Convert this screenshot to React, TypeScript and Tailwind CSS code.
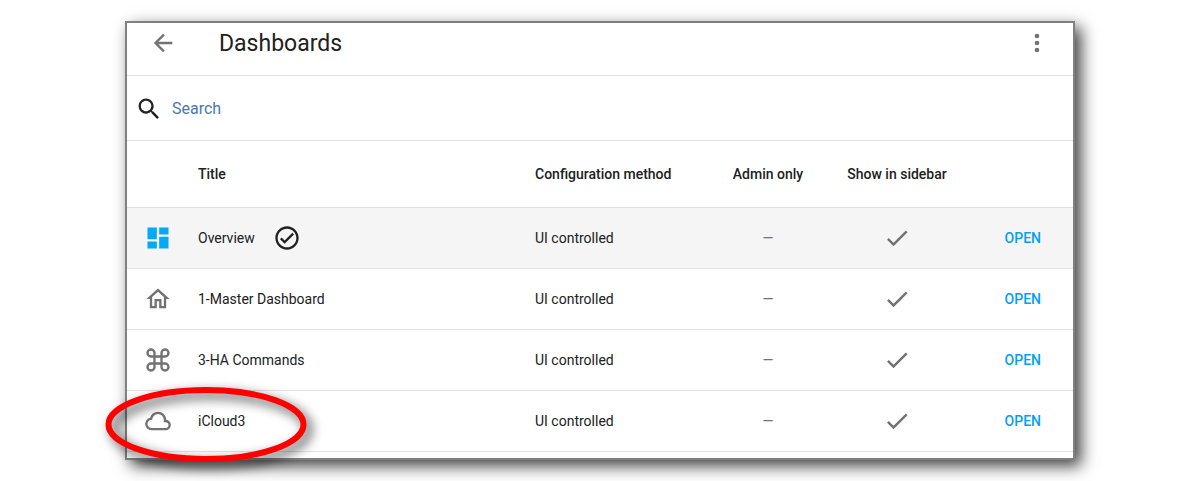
const icons = {
  arrowLeft: 'M20,11V13H8L13.5,18.5L12.08,19.92L4.16,12L12.08,4.08L13.5,5.5L8,11H20Z',
  dots: 'M12,16A2,2 0 0,1 14,18A2,2 0 0,1 12,20A2,2 0 0,1 10,18A2,2 0 0,1 12,16M12,10A2,2 0 0,1 14,12A2,2 0 0,1 12,14A2,2 0 0,1 10,12A2,2 0 0,1 12,10M12,4A2,2 0 0,1 14,6A2,2 0 0,1 12,8A2,2 0 0,1 10,6A2,2 0 0,1 12,4Z',
  magnify: 'M9.5,3A6.5,6.5 0 0,1 16,9.5C16,11.11 15.41,12.59 14.44,13.73L14.71,14H15.5L20.5,19L19,20.5L14,15.5V14.71L13.73,14.44C12.59,15.41 11.11,16 9.5,16A6.5,6.5 0 0,1 3,9.5A6.5,6.5 0 0,1 9.5,3M9.5,5C7,5 5,7 5,9.5C5,12 7,14 9.5,14C12,14 14,12 14,9.5C14,7 12,5 9.5,5Z',
  dashboard: 'M13,3V9H21V3M13,21H21V11H13M3,21H11V15H3M3,13H11V3H3V13Z',
  home: 'M12 5.69L17 10.19V18H15V12H9V18H7V10.19L12 5.69M12 3L2 12H5V20H11V14H13V20H19V12H22L12 3Z',
  command: 'M6,2A4,4 0 0,1 10,6V8H14V6A4,4 0 0,1 18,2A4,4 0 0,1 22,6A4,4 0 0,1 18,10H16V14H18A4,4 0 0,1 22,18A4,4 0 0,1 18,22A4,4 0 0,1 14,18V16H10V18A4,4 0 0,1 6,22A4,4 0 0,1 2,18A4,4 0 0,1 6,14H8V10H6A4,4 0 0,1 2,6A4,4 0 0,1 6,2M16,18A2,2 0 0,0 18,20A2,2 0 0,0 20,18A2,2 0 0,0 18,16H16V18M14,10H10V14H14V10M6,16A2,2 0 0,0 4,18A2,2 0 0,0 6,20A2,2 0 0,0 8,18V16H6M8,6A2,2 0 0,0 6,4A2,2 0 0,0 4,6A2,2 0 0,0 6,8H8V6M18,8A2,2 0 0,0 20,6A2,2 0 0,0 18,4A2,2 0 0,0 16,6V8H18Z',
  cloud: 'M6.5 20Q4.22 20 2.61 18.43 1 16.85 1 14.58 1 12.63 2.17 11.1 3.35 9.57 5.25 9.15 5.88 6.85 7.75 5.43 9.63 4 12 4 14.93 4 16.96 6.04 19 8.07 19 11 20.73 11.2 21.86 12.5 23 13.78 23 15.5 23 17.38 21.69 18.69 20.38 20 18.5 20M6.5 18H18.5Q19.55 18 20.27 17.27 21 16.55 21 15.5 21 14.45 20.27 13.73 19.55 13 18.5 13H17V11Q17 8.93 15.54 7.46 14.08 6 12 6 9.93 6 8.46 7.46 7 8.93 7 11H6.5Q5.05 11 4.03 12.03 3 13.05 3 14.5 3 15.95 4.03 17 5.05 18 6.5 18Z',
  check: 'M21,7L9,19L3.5,13.5L4.91,12.09L9,16.17L19.59,5.59L21,7Z',
  checkCircle: 'M12 2C6.5 2 2 6.5 2 12S6.5 22 12 22 22 17.5 22 12 17.5 2 12 2M12 20C7.59 20 4 16.41 4 12S7.59 4 12 4 20 7.59 20 12 16.41 20 12 20M16.59 7.58L10 14.17L7.41 11.59L6 13L10 17L18 9L16.59 7.58Z',
};

type IconName = keyof typeof icons;

function Icon({ name }: { name: IconName }) {
  return (
    <svg viewBox="0 0 24 24" className="size-7 shrink-0" fill="currentColor" aria-hidden="true">
      <path d={icons[name]} />
    </svg>
  );
}

interface Dashboard {
  title: string;
  icon: IconName;
  isDefault?: boolean;
  highlighted?: boolean;
}

const dashboards: Dashboard[] = [
  { title: 'Overview', icon: 'dashboard', isDefault: true },
  { title: '1-Master Dashboard', icon: 'home' },
  { title: '3-HA Commands', icon: 'command' },
  { title: 'iCloud3', icon: 'cloud', highlighted: true },
];

function Highlight() {
  return (
    <svg
      viewBox="0 0 202 76"
      className="pointer-events-none absolute top-1/2 -left-[22px] h-[76px] w-[202px] max-w-none -translate-y-[34px] overflow-visible drop-shadow-[5px_5px_6px_rgba(0,0,0,0.75)]"
      fill="none"
      aria-hidden="true"
    >
      <ellipse cx="101" cy="37.5" rx="97.5" ry="34.5" stroke="#ff0000" strokeWidth="6" />
    </svg>
  );
}

function Row({ dashboard }: { dashboard: Dashboard }) {
  const { title, icon, isDefault, highlighted } = dashboard;
  return (
    <tr className={isDefault ? 'bg-[#f5f5f5]' : 'bg-white'}>
      <td className="relative h-[61px] border-b border-[#e2e2e2] pl-[17px]">
        <span className={isDefault ? 'text-[#03a9f4]' : 'text-[#727272]'}>
          <Icon name={icon} />
        </span>
        {highlighted && <Highlight />}
      </td>
      <td className="border-b border-[#e2e2e2]">
        <div className="flex items-center gap-[18px]">
          {title}
          {isDefault && <Icon name="checkCircle" />}
        </div>
      </td>
      <td className="border-b border-[#e2e2e2]">UI controlled</td>
      <td className="border-b border-[#e2e2e2] text-center text-[#727272]">—</td>
      <td className="border-b border-[#e2e2e2] text-[#727272]">
        <div className="flex justify-center">
          <Icon name="check" />
        </div>
      </td>
      <td className="border-b border-[#e2e2e2] pr-8 text-right">
        <button type="button" className="font-medium text-[#03a0f0]" aria-label={`Open ${title}`}>
          OPEN
        </button>
      </td>
    </tr>
  );
}

export default function App() {
  return (
    <div className="bg-white px-[125px] py-[21px] font-['Roboto','Liberation_Sans',sans-serif] text-sm text-[#212121]">
      <main className="border-2 border-[#808080] bg-white pb-1.5 shadow-[6px_6px_15px_rgba(0,0,0,0.75)]">
        <header className="flex h-[53px] items-center border-b border-[#e0e0e0] px-[22px] pb-3">
          <button type="button" className="text-[#727272]" aria-label="Back">
            <Icon name="arrowLeft" />
          </button>
          <h1 className="ml-[42px] flex-1 pt-0.5 text-[23px] leading-[30px]">Dashboards</h1>
          <button type="button" className="text-[#727272]" aria-label="More options">
            <Icon name="dots" />
          </button>
        </header>
        <label className="flex h-[65px] items-center gap-[9px] border-b border-[#e0e0e0] pt-0.5 pl-2">
          <Icon name="magnify" />
          <input
            type="text"
            placeholder="Search"
            aria-label="Search"
            className="min-w-0 flex-1 text-base outline-none placeholder:text-[#4a7aad]"
          />
        </label>
        <table className="w-full table-fixed border-separate border-spacing-0">
          <colgroup>
            <col className="w-[71px]" />
            <col />
            <col className="w-[176px]" />
            <col className="w-[114px]" />
            <col className="w-[144px]" />
            <col className="w-[104px]" />
          </colgroup>
          <thead>
            <tr className="text-left">
              <th className="h-[67px] border-b border-[#e0e0e0]" />
              <th className="border-b border-[#e0e0e0] font-medium">Title</th>
              <th className="border-b border-[#e0e0e0] font-medium">Configuration method</th>
              <th className="border-b border-[#e0e0e0] text-center font-medium">Admin only</th>
              <th className="border-b border-[#e0e0e0] text-center font-medium">Show in sidebar</th>
              <th className="border-b border-[#e0e0e0]" />
            </tr>
          </thead>
          <tbody>
            {dashboards.map((dashboard) => (
              <Row key={dashboard.title} dashboard={dashboard} />
            ))}
          </tbody>
        </table>
      </main>
    </div>
  );
}
